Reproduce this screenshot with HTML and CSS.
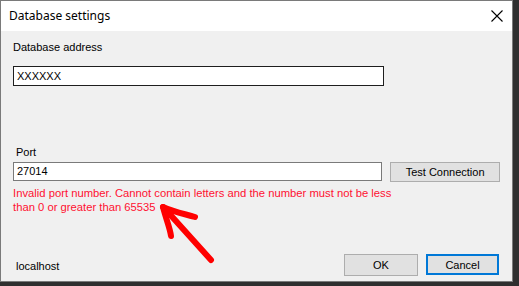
FILE: index.html
```html
<!DOCTYPE html>
<html>
<head>
<meta charset="utf-8">
<link rel="stylesheet" href="styles.css">
</head>
<body>
<div class="window">
  <div class="titlebar">
    <span class="title">Database settings</span>
    <svg class="close" width="12" height="12" viewBox="0 0 12 12"><path d="M0.5 0.5 L11.5 11.5 M11.5 0.5 L0.5 11.5" stroke="#000" stroke-width="1.1" fill="none"/></svg>
  </div>
  <div class="content">
    <div class="label">Database address</div>
    <div class="input address">XXXXXX</div>
    <div class="label port-label">Port</div>
    <div class="port-row">
      <div class="input port">27014</div>
      <div class="button test">Test Connection</div>
    </div>
    <div class="error">Invalid port number. Cannot contain letters and the number must not be less than 0 or greater than 65535</div>
    <div class="footer">
      <span class="host">localhost</span>
      <div class="buttons">
        <div class="button ok">OK</div>
        <div class="button cancel">Cancel</div>
      </div>
    </div>
    <svg class="arrow" width="519" height="286" viewBox="0 0 519 286">
      <g stroke="#ff0000" stroke-width="6" fill="none" stroke-linecap="round" stroke-linejoin="round">
        <path d="M211 260 L166 210"/>
        <path d="M163 207 C174 212 185 214 195 217"/>
        <path d="M163 207 C166 219 170 228 171 236"/>
      </g>
    </svg>
  </div>
</div>
</body>
</html>
```
FILE: styles.css
```css
html, body {
  margin: 0;
  padding: 0;
}
body {
  background: #2f2f2f;
  width: 519px;
  height: 286px;
  overflow: hidden;
  font-family: "Liberation Sans", Arial, sans-serif;
  font-size: 11px;
  color: #000;
}
.window {
  width: 511px;
  height: 280px;
  border: 1px solid #7a7a7a;
  background: #f0f0f0;
  display: flex;
  flex-direction: column;
}
.titlebar {
  height: 30px;
  background: #fff;
  display: flex;
  align-items: center;
  justify-content: space-between;
  padding: 0 9px 0 8px;
}
.title {
  font-family: "Noto Sans", "Liberation Sans", sans-serif;
  font-size: 12px;
  color: #000;
  margin-top: -1px;
}
.content {
  flex: 1;
  display: flex;
  flex-direction: column;
  padding: 10px 12px 0 12px;
}
.label {
  line-height: 13px;
  height: 13px;
}
.input {
  background: #fff;
  box-sizing: border-box;
  height: 20px;
  line-height: 18px;
  padding-left: 3px;
}
.address {
  margin-top: 12px;
  width: 371px;
  border: 1px solid #1e1e1e;
}
.port-label {
  margin-top: 60px;
  margin-left: 3px;
}
.port-row {
  margin-top: 3px;
  display: flex;
  gap: 8px;
}
.port {
  width: 370px;
  height: 19px;
  line-height: 17px;
  border: 1px solid #7a7a7a;
}
.button {
  box-sizing: border-box;
  background: #e1e1e1;
  border: 1px solid #adadad;
  display: flex;
  align-items: center;
  justify-content: center;
}
.test {
  width: 110px;
  height: 20px;
}
.error {
  color: #ff1030;
  font-size: 11.25px;
  line-height: 14px;
  margin-top: 4px;
  width: 392px;
}
.footer {
  margin-top: 40px;
  display: flex;
  align-items: center;
  justify-content: space-between;
  padding-left: 3px;
  padding-right: 1px;
}
.host {
  margin-top: 2px;
}
.buttons {
  display: flex;
  gap: 8px;
}
.ok {
  width: 74px;
  height: 22px;
}
.cancel {
  width: 73px;
  height: 21px;
  border: 2px solid #0078d7;
}
.arrow {
  position: absolute;
  left: 0;
  top: 0;
  pointer-events: none;
}
```
